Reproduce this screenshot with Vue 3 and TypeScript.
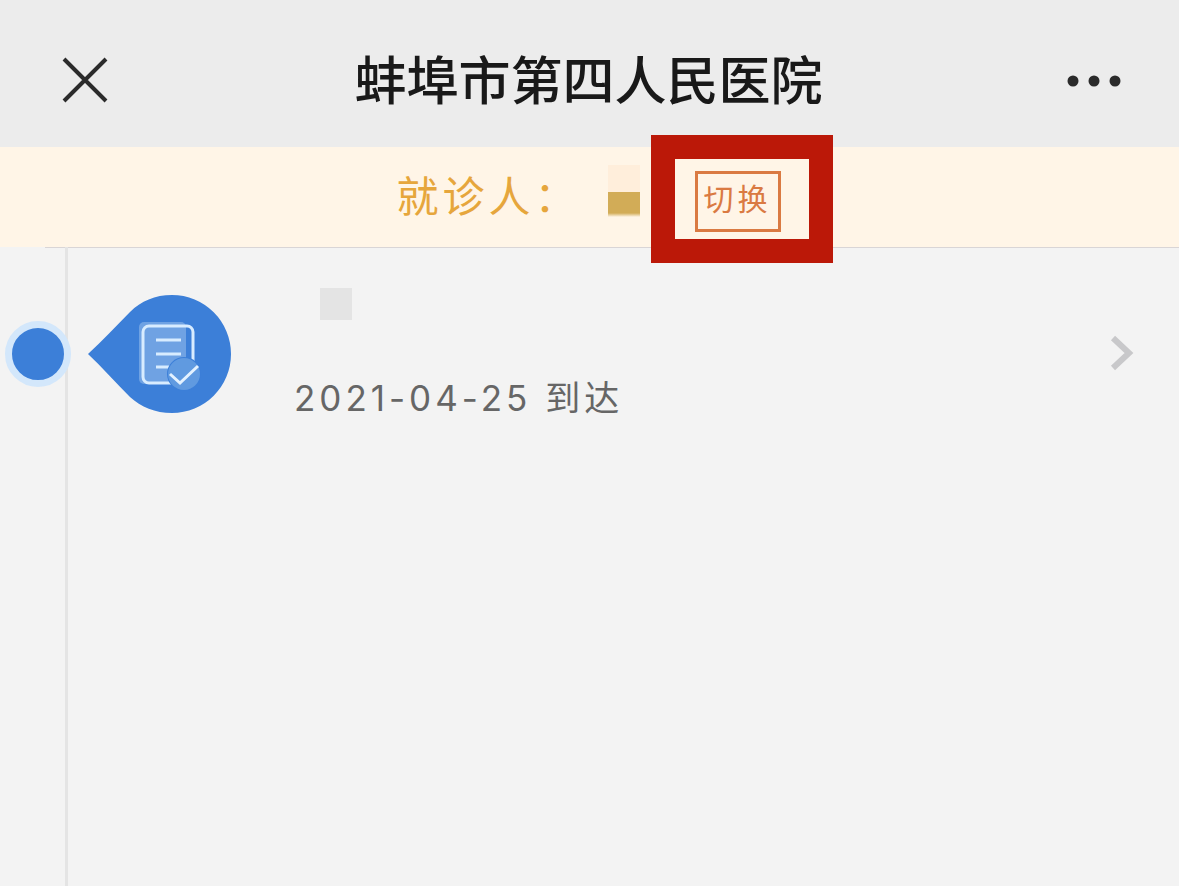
<script setup lang="ts">
interface Visit {
  id: number
  date: string
  status: string
}

const hospital = '蚌埠市第四人民医院'
const visits: Visit[] = [{ id: 1, date: '2021-04-25', status: '到达' }]
</script>

<template>
  <div class="page">
    <header class="titlebar">
      <button class="icon-button" type="button" aria-label="关闭">
        <svg width="48" height="48" viewBox="0 0 48 48" fill="none" stroke="#2b2b2b" stroke-width="4">
          <path d="M2 2 44 44M44 2 2 44" />
        </svg>
      </button>
      <h1>{{ hospital }}</h1>
      <button class="icon-button" type="button" aria-label="更多">
        <svg width="56" height="12" viewBox="0 0 56 12" fill="#2b2b2b">
          <circle cx="6" cy="6" r="5.5" />
          <circle cx="27" cy="6" r="5.5" />
          <circle cx="48" cy="6" r="5.5" />
        </svg>
      </button>
    </header>

    <section class="patient">
      <span class="label">就诊人：</span>
      <span class="masked-name"></span>
      <div class="switch">
        <span class="highlight"></span>
        <button class="switch-button" type="button">切换</button>
      </div>
    </section>

    <main class="timeline">
      <a v-for="visit in visits" :key="visit.id" class="visit" href="#">
        <span class="rail"><span class="dot"></span></span>
        <svg class="marker" width="144" height="120" viewBox="0 0 144 120" fill="none">
          <path d="M0 60 C14 47 28 32 42 18 C53 7 67 1 84 1 A59 59 0 0 1 84 119 C67 119 53 113 42 103 C28 89 14 73 0 60Z" fill="#3c7fd8" />
          <rect x="51" y="28" width="47" height="62" rx="5" fill="#6fa2e3" />
          <rect x="55" y="32" width="50" height="57" rx="6" stroke="#d8ecff" stroke-width="3" />
          <path d="M68 46h25M68 60h25M68 73h14" stroke="#d8ecff" stroke-width="3" />
          <circle cx="96" cy="80" r="17" fill="#3c7fd8" />
          <circle cx="96" cy="80" r="16" fill="#609ae0" />
          <path d="m82 80 10 9 18-17" stroke="#e4f2ff" stroke-width="3" />
        </svg>
        <span class="details">
          <span class="masked-title"></span>
          <span class="arrival">{{ visit.date }} {{ visit.status }}</span>
        </span>
        <svg class="chevron" width="26" height="38" viewBox="0 0 26 38" fill="none" stroke="#c8c8ca" stroke-width="6">
          <path d="M4 3 20 18 4 33" />
        </svg>
      </a>
    </main>
  </div>
</template>

<style>
body {
  margin: 0;
  background: #f3f3f3;
}
</style>

<style scoped>
.page {
  display: flex;
  flex-direction: column;
  min-height: 100vh;
  font-family: Inter, "Noto Sans CJK SC", sans-serif;
}

button {
  margin: 0;
  padding: 0;
  border: 0;
  background: none;
  font: inherit;
  cursor: pointer;
}

.titlebar {
  display: flex;
  align-items: center;
  justify-content: space-between;
  box-sizing: border-box;
  height: 147px;
  padding: 14px 56px 0 62px;
  background: #ececec;
}

.icon-button {
  display: flex;
}

h1 {
  margin: 0;
  padding-top: 2px;
  color: #191919;
  font-size: 52px;
  font-weight: 500;
  line-height: 72px;
}

.patient {
  display: flex;
  align-items: center;
  justify-content: center;
  height: 100px;
  padding-right: 2px;
  background: #fff5e7;
}

.label {
  color: #e6a63c;
  font-size: 42px;
  letter-spacing: 4px;
  line-height: 60px;
}

.masked-name {
  width: 32px;
  height: 52px;
  margin: 0 0 12px 27px;
  background: linear-gradient(#ffeedb 27px, #d2ac57 27px, #d2ac57 48px, #fff5e7);
}

.switch {
  position: relative;
  margin: 8px 0 0 55px;
}

.highlight {
  position: absolute;
  inset: -36px -52px -31px -44px;
  border: 24px solid #bb1808;
  background: #fff5e7;
}

.switch-button {
  position: relative;
  display: block;
  box-sizing: border-box;
  height: 61px;
  padding: 0 6px 8px;
  border: 3px solid #da7a42;
  color: #da7a42;
  font-size: 30px;
  letter-spacing: 4px;
}

.timeline {
  display: flex;
  flex: 1;
  flex-direction: column;
  background: linear-gradient(#e4e4e4, #e4e4e4) 65px 0 / 3px 100% no-repeat,
    linear-gradient(#d9d5d6, #d9d5d6) 45px 0 / 100% 1px no-repeat, #f3f3f3;
}

.visit {
  display: flex;
  align-items: center;
  height: 213px;
  padding-right: 44px;
  text-decoration: none;
}

.rail {
  width: 88px;
}

.dot {
  display: block;
  box-sizing: border-box;
  width: 66px;
  height: 66px;
  margin-left: 5px;
  border: 7px solid #d3e7fb;
  border-radius: 50%;
  background: #3c7fd8;
}

.details {
  display: flex;
  flex: 1;
  flex-direction: column;
  gap: 52px;
  padding: 4px 0 0 62px;
}

.masked-title {
  width: 32px;
  height: 32px;
  margin-left: 26px;
  background: #e4e4e4;
}

.arrival {
  color: #666;
  font-size: 35px;
  letter-spacing: 4px;
  line-height: 52px;
}
</style>
